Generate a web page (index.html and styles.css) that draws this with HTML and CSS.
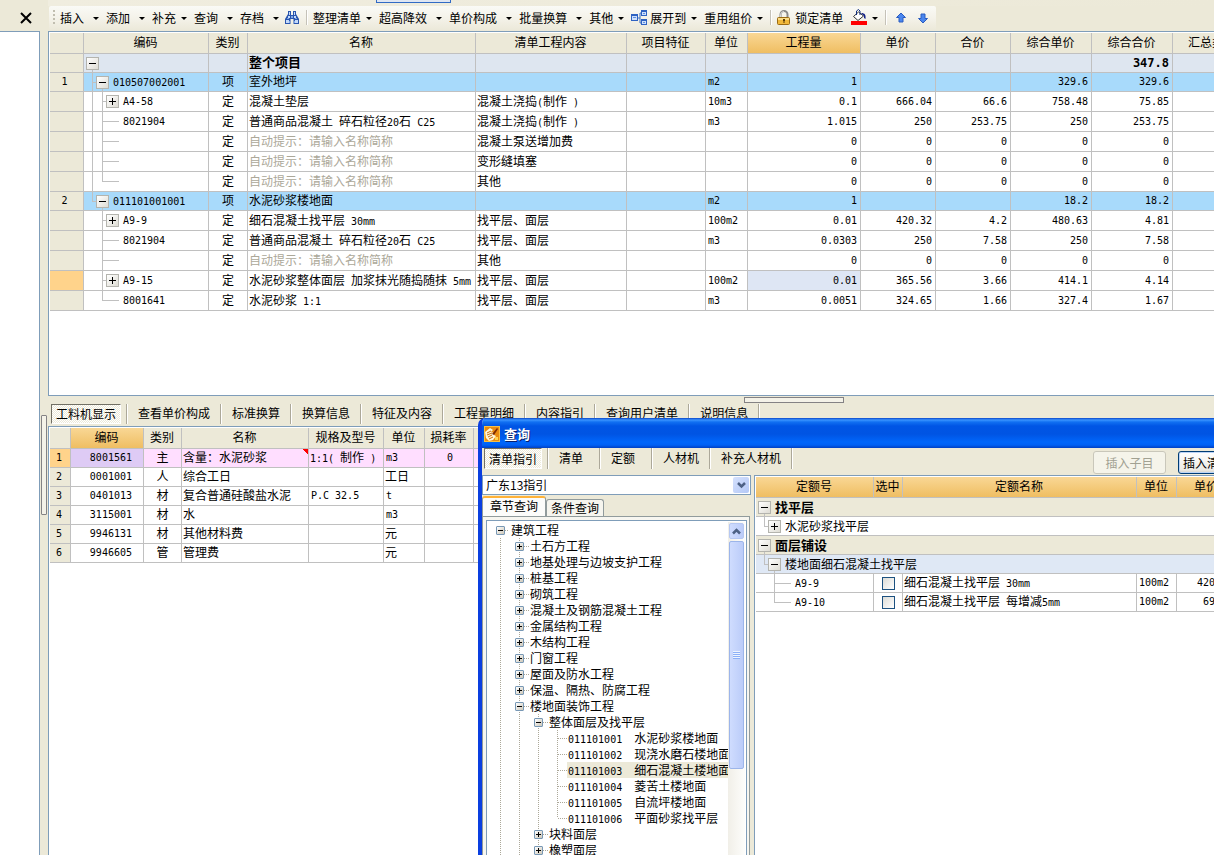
FILE: index.html
```html
<!DOCTYPE html>
<html lang="zh-CN">
<head>
<meta charset="utf-8">
<title>查询</title>
<link rel="stylesheet" href="styles.css">
</head>
<body>
<div class="app">
  <aside class="side">
    <div class="side-head"><button class="close" aria-label="关闭"><svg width="14" height="12" viewBox="0 0 14 12"><path d="M2 1 L12 11 M12 1 L2 11" stroke="#000" stroke-width="2" fill="none"/></svg></button></div>
    <div class="side-body"></div>
  </aside>
  <div class="split-v"><span class="handle-v"></span></div>
  <main class="main">
    <div class="topline"><span class="active-mark"></span></div>
    <div class="toolbar">
      <span class="grip"></span>
      <button class="tb wide">插入</button>
      <button class="tb wide">添加</button>
      <button class="tb">补充</button>
      <button class="tb wide">查询</button>
      <button class="tb wide">存档</button>
      <button class="ic find" aria-label="查找"><svg width="16" height="16" viewBox="0 0 16 16"><path d="M4 1h3v4h2V1h3v3l3 5v5H9.500V9h-3v5H1V9l3-5z" fill="#2a55ae"/><path d="M5 2h1v3H5zM10 2h1v3h-1zM4 6h2v2H4zM10 6h2v2h-2zM2 10h3v3H2zM11 10h3v3h-3z" fill="#c4dafa"/><path d="M3 8h2v1H3zM11 8h2v1h-2zM5 11h1v2H5zM10 11h1v2h-1zM7 6h2v2H7z" fill="#7ea6e8"/></svg></button>
      <span class="sep"></span>
      <button class="tb">整理清单</button>
      <button class="tb wide">超高降效</button>
      <button class="tb wide">单价构成</button>
      <button class="tb wide">批量换算</button>
      <button class="tb">其他</button>
      <button class="tb pic"><svg width="17" height="16" viewBox="0 0 17 16"><path d="M6 8h3M9 8V3h3M9 8v5h3" stroke="#3a6fc4" fill="none"/><path d="M0 4h7v7H0zM10 0h6v6h-6zM10 9h6v6h-6z" fill="#2f62c2"/><path d="M1 6h5v4H1zM11 2h4v3h-4zM11 11h4v3h-4z" fill="#cfe0fb"/><path d="M2 7h3v1H2zM12 3h2v1h-2zM12 12h2v1h-2z" fill="#5e8fe0"/></svg>展开到</button>
      <button class="tb">重用组价</button>
      <span class="sep"></span>
      <button class="ic text"><svg width="14" height="16" viewBox="0 0 14 16"><path d="M3.500 8V4.500a3.500 3.500 0 0 1 7 0V8" fill="none" stroke="#8a8a8a" stroke-width="2"/><path d="M3.500 7V4.500a3.500 3.500 0 0 1 3.500-3" fill="none" stroke="#d8d8d8"/><rect x=".5" y="7.500" width="12" height="7" rx="1" fill="#f1b83a" stroke="#9a6a14"/><path d="M1 8h11v2H1z" fill="#fbdc85"/><path d="M6 9h2v2H7.500v2h-1v-2H6z" fill="#5c3b05"/></svg>锁定清单</button>
      <button class="tb fill" aria-label="填充颜色"><svg width="16" height="17" viewBox="0 0 16 17"><path d="M7.500 3 L12.500 7 L7 11.500 L2.500 7.500 Z" fill="#fff" stroke="#333"/><path d="M5.500 6V2l2-1.500L9 2v4" fill="none" stroke="#12307e"/><path d="M10 4c4 0 5 2 4.500 6L13 9V7z" fill="#12208a"/><path d="M0 12h16v4H0z" fill="#f00"/></svg></button>
      <span class="sep"></span>
      <button class="ic arrow" aria-label="上移"><svg width="10" height="12" viewBox="0 0 10 12"><path d="M5 1l4.500 4.500H7V10H3V5.500H.5z" fill="#4a86ee" stroke="#2a5cc0"/></svg></button>
      <button class="ic arrow" aria-label="下移"><svg width="10" height="12" viewBox="0 0 10 12"><path d="M5 11L.5 6.500H3V2h4v4.500h2.500z" fill="#4a86ee" stroke="#2a5cc0"/></svg></button>
    </div>
    <section class="grid-box upper">
      <table class="grid bill">
        <colgroup><col class="w34"><col class="w125"><col class="w39"><col class="w228"><col class="w151"><col class="w79"><col class="w42"><col class="w113"><col class="w75"><col class="w75"><col class="w81"><col class="w81"><col></colgroup>
        <thead><tr><th></th><th>编码</th><th>类别</th><th>名称</th><th>清单工程内容</th><th>项目特征</th><th>单位</th><th class="hot">工程量</th><th>单价</th><th>合价</th><th>综合单价</th><th>综合合价</th><th class="cut">汇总类别</th></tr></thead>
        <tbody>
        <tr class="total short"><td class="rh"></td><td><div class="tree"><span class="node open"><button class="knob minus" aria-label="折叠"></button></span></div></td><td></td><td class="b">整个项目</td><td></td><td></td><td></td><td></td><td></td><td></td><td></td><td class="num b">347.8</td><td></td></tr>
        <tr class="item short"><td class="rh">1</td><td><div class="tree"><i class="g tee"></i><span class="node open"><button class="knob minus" aria-label="折叠"></button></span><span class="code">010507002001</span></div></td><td class="c">项</td><td>室外地坪</td><td></td><td></td><td class="n">m2</td><td class="num">1</td><td></td><td></td><td class="num">329.6</td><td class="num">329.6</td><td></td></tr>
        <tr><td class="rh"></td><td><div class="tree"><i class="g bar"></i><i class="g tee"></i><span class="node"><button class="knob plus" aria-label="展开"></button></span><span class="code">A4-58</span></div></td><td class="c">定</td><td>混凝土垫层</td><td>混凝土浇捣<span class="n">(</span>制作<span class="n"> )</span></td><td></td><td class="n">10m3</td><td class="num">0.1</td><td class="num">666.04</td><td class="num">66.6</td><td class="num">758.48</td><td class="num">75.85</td><td></td></tr>
        <tr><td class="rh"></td><td><div class="tree"><i class="g bar"></i><i class="g tee"></i><i class="leaf"></i><span class="code">8021904</span></div></td><td class="c">定</td><td>普通商品混凝土<span class="n"> </span>碎石粒径<span class="n">20</span>石<span class="n"> C25</span></td><td>混凝土浇捣<span class="n">(</span>制作<span class="n"> )</span></td><td></td><td class="n">m3</td><td class="num">1.015</td><td class="num">250</td><td class="num">253.75</td><td class="num">250</td><td class="num">253.75</td><td></td></tr>
        <tr><td class="rh"></td><td><div class="tree"><i class="g bar"></i><i class="g tee"></i><i class="leaf"></i></div></td><td class="c">定</td><td class="hint">自动提示：请输入名称简称</td><td>混凝土泵送增加费</td><td></td><td></td><td class="num">0</td><td class="num">0</td><td class="num">0</td><td class="num">0</td><td class="num">0</td><td></td></tr>
        <tr><td class="rh"></td><td><div class="tree"><i class="g bar"></i><i class="g tee"></i><i class="leaf"></i></div></td><td class="c">定</td><td class="hint">自动提示：请输入名称简称</td><td>变形缝填塞</td><td></td><td></td><td class="num">0</td><td class="num">0</td><td class="num">0</td><td class="num">0</td><td class="num">0</td><td></td></tr>
        <tr><td class="rh"></td><td><div class="tree"><i class="g bar"></i><i class="g elbow"></i><i class="leaf"></i></div></td><td class="c">定</td><td class="hint">自动提示：请输入名称简称</td><td>其他</td><td></td><td></td><td class="num">0</td><td class="num">0</td><td class="num">0</td><td class="num">0</td><td class="num">0</td><td></td></tr>
        <tr class="item short"><td class="rh">2</td><td><div class="tree"><i class="g elbow"></i><span class="node open"><button class="knob minus" aria-label="折叠"></button></span><span class="code">011101001001</span></div></td><td class="c">项</td><td>水泥砂浆楼地面</td><td></td><td></td><td class="n">m2</td><td class="num">1</td><td></td><td></td><td class="num">18.2</td><td class="num">18.2</td><td></td></tr>
        <tr><td class="rh"></td><td><div class="tree"><i class="g"></i><i class="g tee"></i><span class="node"><button class="knob plus" aria-label="展开"></button></span><span class="code">A9-9</span></div></td><td class="c">定</td><td>细石混凝土找平层<span class="n"> 30mm</span></td><td>找平层、面层</td><td></td><td class="n">100m2</td><td class="num">0.01</td><td class="num">420.32</td><td class="num">4.2</td><td class="num">480.63</td><td class="num">4.81</td><td></td></tr>
        <tr><td class="rh"></td><td><div class="tree"><i class="g"></i><i class="g tee"></i><i class="leaf"></i><span class="code">8021904</span></div></td><td class="c">定</td><td>普通商品混凝土<span class="n"> </span>碎石粒径<span class="n">20</span>石<span class="n"> C25</span></td><td>找平层、面层</td><td></td><td class="n">m3</td><td class="num">0.0303</td><td class="num">250</td><td class="num">7.58</td><td class="num">250</td><td class="num">7.58</td><td></td></tr>
        <tr><td class="rh"></td><td><div class="tree"><i class="g"></i><i class="g tee"></i><i class="leaf"></i></div></td><td class="c">定</td><td class="hint">自动提示：请输入名称简称</td><td>其他</td><td></td><td></td><td class="num">0</td><td class="num">0</td><td class="num">0</td><td class="num">0</td><td class="num">0</td><td></td></tr>
        <tr><td class="rh current"></td><td><div class="tree"><i class="g"></i><i class="g tee"></i><span class="node"><button class="knob plus" aria-label="展开"></button></span><span class="code">A9-15</span></div></td><td class="c">定</td><td>水泥砂浆整体面层<span class="n"> </span>加浆抹光随捣随抹<span class="n"> 5mm</span></td><td>找平层、面层</td><td></td><td class="n">100m2</td><td class="num picked">0.01</td><td class="num">365.56</td><td class="num">3.66</td><td class="num">414.1</td><td class="num">4.14</td><td></td></tr>
        <tr><td class="rh"></td><td><div class="tree"><i class="g"></i><i class="g elbow"></i><i class="leaf"></i><span class="code">8001641</span></div></td><td class="c">定</td><td>水泥砂浆<span class="n"> 1:1</span></td><td>找平层、面层</td><td></td><td class="n">m3</td><td class="num">0.0051</td><td class="num">324.65</td><td class="num">1.66</td><td class="num">327.4</td><td class="num">1.67</td><td></td></tr>
        </tbody>
      </table>
    </section>
    <div class="split-h"><span class="handle-h"></span></div>
    <nav class="tabs">
      <button class="tab pressed">工料机显示</button><button class="tab">查看单价构成</button><button class="tab">标准换算</button><button class="tab">换算信息</button><button class="tab">特征及内容</button><button class="tab">工程量明细</button><button class="tab">内容指引</button><button class="tab">查询用户清单</button><button class="tab">说明信息</button><span class="tab-end"></span>
    </nav>
    <section class="grid-box lower">
      <table class="grid parts">
        <colgroup><col class="w21"><col class="w73"><col class="w38"><col class="w127"><col class="w75"><col class="w41"><col class="w49"><col></colgroup>
        <thead><tr><th></th><th class="hot">编码</th><th>类别</th><th>名称</th><th>规格及型号</th><th>单位</th><th>损耗率</th><th></th></tr></thead>
        <tbody>
        <tr class="pink short"><td class="rh current">1</td><td class="num pcode">8001561</td><td class="c">主</td><td class="flag">含量：水泥砂浆</td><td><span class="n">1:1( </span>制作<span class="n"> )</span></td><td class="n">m3</td><td class="n c">0</td><td></td></tr>
        <tr class="short"><td class="rh">2</td><td class="num pcode">0001001</td><td class="c">人</td><td>综合工日</td><td></td><td>工日</td><td></td><td></td></tr>
        <tr class="short"><td class="rh">3</td><td class="num pcode">0401013</td><td class="c">材</td><td>复合普通硅酸盐水泥</td><td class="n">P.C 32.5</td><td class="n">t</td><td></td><td></td></tr>
        <tr class="short"><td class="rh">4</td><td class="num pcode">3115001</td><td class="c">材</td><td>水</td><td></td><td class="n">m3</td><td></td><td></td></tr>
        <tr class="short"><td class="rh">5</td><td class="num pcode">9946131</td><td class="c">材</td><td>其他材料费</td><td></td><td>元</td><td></td><td></td></tr>
        <tr class="short"><td class="rh">6</td><td class="num pcode">9946605</td><td class="c">管</td><td>管理费</td><td></td><td>元</td><td></td><td></td></tr>
        </tbody>
      </table>
    </section>
  </main>
</div>

<div class="dialog" role="dialog" aria-labelledby="dlg-title">
  <header class="title">
    <svg width="16" height="16" viewBox="0 0 16 16"><rect x=".5" y=".5" width="15" height="15" fill="#e98b12" stroke="#f8c044"/><path d="M1 6l5-4 3 2-2 2 3 1v2l2 1-3 4-4 1-3-3z" fill="#fff6d8"/><path d="M8 8l5-6 1 1-4 6z" fill="#7c2b05"/><path d="M3 7l4-2M3 9l5-2M4 11l4-2M5 13l4-2" stroke="#c86a0c"/><path d="M11 11h3v3h-3z" fill="#ffd452"/></svg>
    <h1 id="dlg-title">查询</h1>
  </header>
  <div class="dlg-bar">
    <nav class="dlg-tabs">
      <button class="tab pressed">清单指引</button><button class="tab">清单</button><button class="tab">定额</button><button class="tab">人材机</button><button class="tab">补充人材机</button><span class="tab-end"></span>
    </nav>
    <div class="actions"><button class="push" disabled>插入子目</button><button class="push default">插入清单</button></div>
  </div>
  <div class="dlg-body">
    <div class="nav-pane">
      <div class="combo"><select aria-label="指引"><option>广东13指引</option></select><span class="drop"><svg width="9" height="7" viewBox="0 0 9 7"><path d="M1 1l3.500 3.500L8 1" fill="none" stroke="#4d6185" stroke-width="2.500"/></svg></span></div>
      <div class="folder-tabs"><button class="folder on">章节查询</button><button class="folder">条件查询</button></div>
      <div class="page">
        <div class="tree-box">
          <ul class="outline">
            <li><i class="d root"><button class="sq minus" aria-label="折叠"></button></i>建筑工程</li>
            <li><i class="d v"></i><i class="d v h"><button class="sq plus" aria-label="展开"></button></i>土石方工程</li>
            <li><i class="d v"></i><i class="d v h"><button class="sq plus" aria-label="展开"></button></i>地基处理与边坡支护工程</li>
            <li><i class="d v"></i><i class="d v h"><button class="sq plus" aria-label="展开"></button></i>桩基工程</li>
            <li><i class="d v"></i><i class="d v h"><button class="sq plus" aria-label="展开"></button></i>砌筑工程</li>
            <li><i class="d v"></i><i class="d v h"><button class="sq plus" aria-label="展开"></button></i>混凝土及钢筋混凝土工程</li>
            <li><i class="d v"></i><i class="d v h"><button class="sq plus" aria-label="展开"></button></i>金属结构工程</li>
            <li><i class="d v"></i><i class="d v h"><button class="sq plus" aria-label="展开"></button></i>木结构工程</li>
            <li><i class="d v"></i><i class="d v h"><button class="sq plus" aria-label="展开"></button></i>门窗工程</li>
            <li><i class="d v"></i><i class="d v h"><button class="sq plus" aria-label="展开"></button></i>屋面及防水工程</li>
            <li><i class="d v"></i><i class="d v h"><button class="sq plus" aria-label="展开"></button></i>保温、隔热、防腐工程</li>
            <li><i class="d v"></i><i class="d v h"><button class="sq minus" aria-label="折叠"></button></i>楼地面装饰工程</li>
            <li><i class="d v"></i><i class="d v"></i><i class="d v h"><button class="sq minus" aria-label="折叠"></button></i>整体面层及找平层</li>
            <li><i class="d v"></i><i class="d v"></i><i class="d v"></i><i class="d v h"></i><span class="entry"><span class="n">011101001  </span>水泥砂浆楼地面</span></li>
            <li><i class="d v"></i><i class="d v"></i><i class="d v"></i><i class="d v h"></i><span class="entry"><span class="n">011101002  </span>现浇水磨石楼地面</span></li>
            <li><i class="d v"></i><i class="d v"></i><i class="d v"></i><i class="d v h"></i><span class="entry sel"><span class="n">011101003  </span>细石混凝土楼地面</span></li>
            <li><i class="d v"></i><i class="d v"></i><i class="d v"></i><i class="d v h"></i><span class="entry"><span class="n">011101004  </span>菱苦土楼地面</span></li>
            <li><i class="d v"></i><i class="d v"></i><i class="d v"></i><i class="d v h"></i><span class="entry"><span class="n">011101005  </span>自流坪楼地面</span></li>
            <li><i class="d v"></i><i class="d v"></i><i class="d v"></i><i class="d v h end"></i><span class="entry"><span class="n">011101006  </span>平面砂浆找平层</span></li>
            <li><i class="d v"></i><i class="d v"></i><i class="d v h"><button class="sq plus" aria-label="展开"></button></i>块料面层</li>
            <li><i class="d v"></i><i class="d v"></i><i class="d v h"><button class="sq plus" aria-label="展开"></button></i>橡塑面层</li>
          </ul>
          <div class="scroll">
            <button class="up" aria-label="向上滚动"><svg width="9" height="7" viewBox="0 0 9 7"><path d="M1 5.500l3.500-3.500L8 5.500" fill="none" stroke="#4d6185" stroke-width="2.500"/></svg></button>
            <div class="thumb"><span></span></div>
          </div>
        </div>
      </div>
    </div>
    <section class="quota-box">
      <table class="grid quota">
        <colgroup><col class="w118"><col class="w29"><col><col class="w40"><col class="w60"></colgroup>
        <thead><tr><th class="hot">定额号</th><th class="hot">选中</th><th class="hot">定额名称</th><th class="hot">单位</th><th class="hot">单价</th></tr></thead>
        <tbody>
        <tr class="short group"><td colspan="5"><div class="tree"><span class="node open"><button class="knob minus" aria-label="折叠"></button></span><span class="code b">找平层</span></div></td></tr>
        <tr class="short"><td colspan="5"><div class="tree"><i class="g elbow"></i><span class="node"><button class="knob plus" aria-label="展开"></button></span><span class="code cn">水泥砂浆找平层</span></div></td></tr>
        <tr class="short group"><td colspan="5"><div class="tree"><span class="node open"><button class="knob minus" aria-label="折叠"></button></span><span class="code b">面层铺设</span></div></td></tr>
        <tr class="short sub"><td colspan="5"><div class="tree"><i class="g elbow"></i><span class="node open"><button class="knob minus" aria-label="折叠"></button></span><span class="code cn">楼地面细石混凝土找平层</span></div></td></tr>
        <tr class="short"><td><div class="tree"><i class="g"></i><i class="g tee"></i><i class="leaf"></i><span class="code">A9-9</span></div></td><td class="c"><input type="checkbox" class="box" aria-label="选中 A9-9"></td><td>细石混凝土找平层<span class="n"> 30mm</span></td><td class="n">100m2</td><td class="num">420.32</td></tr>
        <tr class="short"><td><div class="tree"><i class="g"></i><i class="g elbow"></i><i class="leaf"></i><span class="code">A9-10</span></div></td><td class="c"><input type="checkbox" class="box" aria-label="选中 A9-10"></td><td>细石混凝土找平层<span class="n"> </span>每增减<span class="n">5mm</span></td><td class="n">100m2</td><td class="num">69.12</td></tr>
        </tbody>
      </table>
    </section>
  </div>
</div>
</body>
</html>
```

FILE: styles.css
```css
* { box-sizing: border-box; }
html, body { height: 100%; }
body {
  margin: 0;
  overflow: hidden;
  background: #ece9d8;
  color: #000;
  font: 12px/16px "Noto Sans CJK SC", "Liberation Sans", sans-serif;
}
button, select { font: inherit; color: inherit; border: 0; background: none; padding: 0; margin: 0; white-space: nowrap; }
svg { display: block; flex: none; }
i { font-style: normal; }

.n, .num { font-family: "DejaVu Sans Mono", "Noto Sans CJK SC", monospace; font-size: 10px; white-space: pre; }
span.n { line-height: 10px; }
.b { font-weight: bold; font-size: 13px; }
.num.b { font-size: 12px; }

.app { display: grid; grid-template-columns: 40px 8px minmax(0, 1fr); height: 100%; }

/* left dock */
.side { display: flex; flex-direction: column; }
.side-head { height: 31px; display: flex; align-items: flex-end; justify-content: flex-end; padding: 0 7px 7px 0; }
.side-body { flex: 1; background: #fff; border: solid #7f9db9; border-width: 1px 1px 0 0; }
.split-v { display: flex; padding: 415px 1px 0; }
.handle-v { width: 6px; height: 100px; border: 1px solid #848284; background: #f4f2e8; border-radius: 1px; }

/* top toolbar */
.main { display: flex; flex-direction: column; min-width: 0; }
.topline { height: 6px; padding-left: 328px; background: linear-gradient(90deg, #f0eddf, #ece9d8); }
.active-mark { display: block; width: 75px; height: 3px; border: 1px solid #316ac5; border-top: 0; background: #dfe6f2; }
.toolbar {
  align-self: flex-start; height: 25px; display: flex; align-items: center;
  padding: 0 4px 2px 4px; margin-left: 1px; border-radius: 2px;
  background: linear-gradient(#fafaf6, #f4f2e9 50%, #ebe8d8);
}
.grip { width: 2px; height: 15px; margin-right: 5px; background: repeating-linear-gradient(#c1beb0 0 2px, transparent 2px 4px); }
.tb { display: flex; align-items: center; }
.tb::after { content: ""; border: 3px solid transparent; border-bottom: 0; border-top-color: #000; margin: 2px 7px 0 5px; }
.tb.wide::after { margin-left: 9px; }
.pic svg { margin-right: 2px; }
.ic { display: flex; align-items: center; }
.ic.text { gap: 4px; }
.find { margin: 0 6px 0 -2px; }
.fill { margin-left: 8px; }
.sep { width: 2px; height: 15px; margin: 0 5px 0 0; border-left: 1px solid #c5c2b8; border-right: 1px solid #fff; }
.arrow { padding: 0 4px; }
.arrow + .arrow { padding-left: 8px; }

/* tables */
.grid-box { background: #fff; border: solid #7f9db9; border-width: 1px 0 1px 1px; padding: 1px 0 0 1px; overflow: hidden; }
.upper { min-height: 365px; }
.lower { flex: 1; border-bottom: 0; }
.grid { width: 100%; table-layout: fixed; border-collapse: separate; border-spacing: 0; }
.bill { width: calc(100% + 28px); }
.grid th, .grid td { border: solid #c0c0c0; border-width: 0 1px 1px 0; padding: 0 2px 0 1px; white-space: nowrap; overflow: hidden; }
.grid th { height: 21px; font-weight: normal; background: #ece9d8; text-align: center; line-height: 18px; padding-bottom: 2px; }
.grid th.hot { background: linear-gradient(#f9d795, #efbe62); }
.grid th.cut { text-align: left; padding-left: 15px; }
.grid td { height: 20px; line-height: 16px; padding-bottom: 2px; }
.grid .short td { height: 19px; }
.grid td.c { text-align: center; padding: 0 0 2px; }
.grid td.num, .grid td.n, .grid td:has(.tree), .grid td:has(.box) { padding-bottom: 0; }
.grid td.num { text-align: right; padding-right: 3px; }
.grid td.rh { background: #ece9d8; text-align: center; padding: 0 4px 0 0; font: 10px/16px "DejaVu Sans Mono", monospace; }
.grid td.current, .parts td.current { background: #ffd38b; }
.parts td.rh { padding: 0 2px 0 0; }
.grid td.n { padding-left: 2px; }
.hint { color: #aca899; }
.total td { background: #dee6f0; }
.item td { background: #a8dafb; }
.grid td.picked { background: #dee6f4; }
.pink td { background: #ffdeff; }
.parts .pink td.pcode { background: #decbf5; }
.grid td.pcode { padding-right: 11px; }
.grid td.flag { background: linear-gradient(225deg, #f00 4px, transparent 4px) #ffdeff; }
.w21 { width: 21px; } .w29 { width: 29px; } .w34 { width: 34px; } .w38 { width: 38px; }
.w39 { width: 39px; } .w40 { width: 40px; } .w41 { width: 41px; } .w42 { width: 42px; }
.w49 { width: 49px; } .w60 { width: 60px; } .w73 { width: 73px; } .w75 { width: 75px; }
.w79 { width: 79px; } .w81 { width: 81px; } .w113 { width: 113px; } .w118 { width: 118px; }
.w125 { width: 125px; } .w127 { width: 127px; } .w151 { width: 151px; } .w228 { width: 228px; }

.tree { display: flex; align-items: center; height: 19px; padding-left: 1px; }
.short .tree { height: 18px; }
.g { width: 10px; height: 100%; background-repeat: no-repeat; }
.bar { background-image: linear-gradient(#c0c0c0, #c0c0c0); background-size: 1px 100%; background-position: 6px 0; }
.tee { background-image: linear-gradient(#c0c0c0, #c0c0c0), linear-gradient(#c0c0c0, #c0c0c0); background-size: 1px 100%, 4px 1px; background-position: 6px 0, 6px 50%; }
.elbow { background-image: linear-gradient(#c0c0c0, #c0c0c0), linear-gradient(#c0c0c0, #c0c0c0); background-size: 1px 50%, 4px 1px; background-position: 6px 0, 6px 50%; }
.leaf { width: 13px; height: 100%; background: linear-gradient(#c0c0c0, #c0c0c0) 0 50% / 100% 1px no-repeat; }
.node { width: 13px; height: 100%; display: flex; align-items: center; }
.node.open { background: linear-gradient(#c0c0c0, #c0c0c0) 6px 100% / 1px 50% no-repeat; }
.knob { width: 13px; height: 13px; border: 1px solid #b4b4ae; }
.knob.minus { background: linear-gradient(#000, #000) 50% 50% / 7px 1px no-repeat, linear-gradient(135deg, #fff, #dedcd4); }
.knob.plus { background: linear-gradient(#000, #000) 50% 50% / 7px 1px no-repeat, linear-gradient(#000, #000) 50% 50% / 1px 7px no-repeat, linear-gradient(135deg, #fff, #dedcd4); }
.code { padding: 1px 0 0 4px; font-family: "DejaVu Sans Mono", monospace; font-size: 10px; }
.code.b, .code.cn { padding-top: 0; font: 12px/16px "Noto Sans CJK SC", sans-serif; }
.code.b { font-size: 13px; font-weight: bold; }

/* lower tab strip */
.split-h { height: 7px; display: flex; padding: 1px 0 0 calc(60% - 4px); }
.handle-h { width: 100px; height: 6px; border: 1px solid #848284; background: #f4f2e8; }
.tabs { display: flex; height: 23px; padding: 1px 0 2px 3px; align-items: stretch; }
.tab { line-height: 16px; padding: 0 10px 2px; border-left: 1px solid #aca899; box-shadow: inset 1px 0 #fff; text-align: left; }
.tab + .tab { padding-left: 11px; }
.tab.pressed {
  padding: 0 4px; margin-right: 5px; border: 1px solid; border-color: #716f64 #fff #fff #716f64; box-shadow: none;
  background: repeating-conic-gradient(#fff 0 25%, #ece9d8 0 50%) 0 0 / 2px 2px;
}
.tab-end { width: 2px; border-left: 1px solid #aca899; border-right: 1px solid #fff; }

/* query window */
.dialog {
  position: absolute; left: 478px; top: 418px; right: 0; bottom: 0;
  display: flex; flex-direction: column; overflow: hidden;
  background: #ece9d8; border-left: 4px solid #0a3fe0; border-top-left-radius: 7px;
}
.title {
  display: flex; align-items: center; gap: 4px; height: 30px; padding: 2px 0 0 2px; flex: none; color: #fff;
  background: linear-gradient(#0a45c8 0, #3a93ff 2px, #1170f2 4px, #0055e5 8px, #0054e3 16px, #0066fb 24px, #0061f5 27px, #0040c4 30px);
}
.title h1 { margin: 0; font-size: 13px; line-height: 20px; text-shadow: 1px 1px #0a1f6b; }
.dlg-bar { display: flex; justify-content: space-between; height: 27px; flex: none; }
.dlg-tabs { display: flex; height: 21px; padding-left: 2px; }
.dlg-tabs .tab { min-width: 52px; }
.actions { display: flex; gap: 12px; padding-top: 3px; width: 121px; flex: none; }
.push { height: 23px; flex: 0 0 73px; border: 1px solid #003c74; border-radius: 3px; line-height: 19px; background: linear-gradient(#fff, #ecebe5 85%, #d6d0c5); }
.push.default { text-align: left; padding-left: 4px; box-shadow: inset 0 0 0 1px #bcd4f6; }
.push:disabled { background: #f5f4ea; border-color: #c9c7ba; color: #a1a192; }
.dlg-body { flex: 1; min-height: 0; display: grid; grid-template-columns: 272px minmax(0, 1fr); }
.nav-pane { display: flex; flex-direction: column; min-height: 0; padding-right: 3px; }
.combo { display: flex; height: 20px; border: 1px solid #7f9db9; background: #fff; padding: 1px; flex: none; }
.combo select { flex: 1; appearance: none; padding-left: 2px; line-height: 16px; }
.drop { width: 16px; display: flex; align-items: center; justify-content: center; background: linear-gradient(135deg, #d5e1fd, #b4c8f6); border-radius: 2px; }
.folder-tabs { display: flex; align-items: flex-end; height: 21px; flex: none; padding-top: 1px; }
.folder { height: 17px; padding: 0 4px; border: 1px solid #919b9c; border-bottom: 0; border-radius: 3px 3px 0 0; line-height: 16px; background: #f6f5ee; }
.folder.on { height: 20px; padding: 0 7px 2px; line-height: 16px; border-top: 2px solid #ffb238; background: #fcfcfa; }
.page { flex: 1; min-height: 0; display: flex; margin-right: 1px; border: solid #919b9c; border-width: 1px 1px 0 1px; background: #f7f6f0; padding: 3px 2px 0 3px; }
.tree-box { flex: 1; min-width: 0; display: flex; border: solid #7f9db9; border-width: 1px 1px 0 1px; background: #fff; padding: 1px 1px 0 4px; }
.outline { flex: 1; min-width: 0; margin: 0; padding: 0; list-style: none; overflow: hidden; }
.outline li { display: flex; height: 16px; white-space: nowrap; }
.d { width: 19px; height: 16px; flex: none; display: flex; align-items: center; padding-left: 5px; background-repeat: no-repeat; }
.d:has(.sq) { width: 20px; }
.v { background-image: repeating-linear-gradient(#aca899 0 1px, transparent 1px 2px); background-size: 1px 100%; background-position: 9px 0; }
.v.h { background-image: repeating-linear-gradient(#aca899 0 1px, transparent 1px 2px), repeating-linear-gradient(90deg, #aca899 0 1px, transparent 1px 2px); background-size: 1px 100%, 9px 1px; background-position: 9px 0, 10px 8px; }
.v.h.end { background-size: 1px 8px, 9px 1px; }
.root { background-image: repeating-linear-gradient(90deg, #aca899 0 1px, transparent 1px 2px); background-size: 8px 1px; background-position: 10px 8px; }
.sq { width: 9px; height: 9px; border: 1px solid #7898b5; border-radius: 1px; }
.sq.minus { background: linear-gradient(#000, #000) 50% 50% / 5px 1px no-repeat, linear-gradient(135deg, #fff, #cdc7b8); }
.sq.plus { background: linear-gradient(#000, #000) 50% 50% / 5px 1px no-repeat, linear-gradient(#000, #000) 50% 50% / 1px 5px no-repeat, linear-gradient(135deg, #fff, #cdc7b8); }
.entry { padding-left: 1px; flex: 1 0 auto; }
.sel { background: #ece9d8; }
.scroll { width: 17px; flex: none; display: flex; flex-direction: column; gap: 2px; padding: 1px; background: linear-gradient(90deg, #f1efe8, #fdfdfb); }
.up, .thumb { border: 1px solid #b6c8f2; border-radius: 2px; background: linear-gradient(90deg, #cfdcfe, #bbccf9); display: flex; align-items: center; justify-content: center; }
.up { height: 16px; flex: none; }
.thumb { height: 228px; flex: none; border-color: #9cb5ea; }
.thumb span { width: 7px; height: 8px; background: repeating-linear-gradient(#eef4fe 0 1px, #8cb0f8 1px 2px); }
.quota-box { background: #fff; border: solid #7f9db9; border-width: 1px 0 0 1px; padding: 1px 0 0 1px; overflow: hidden; }
.quota { width: calc(100% + 23px); }
.group td { background: #ece9d8; }
.sub td { background: #dfe8f5; }
.quota tbody td[colspan] { border-right: 0; }
.box { appearance: none; display: block; width: 13px; height: 13px; margin: 0 auto; border: 1px solid #1c5180; background: linear-gradient(135deg, #dcdcd7, #fff); }
```
